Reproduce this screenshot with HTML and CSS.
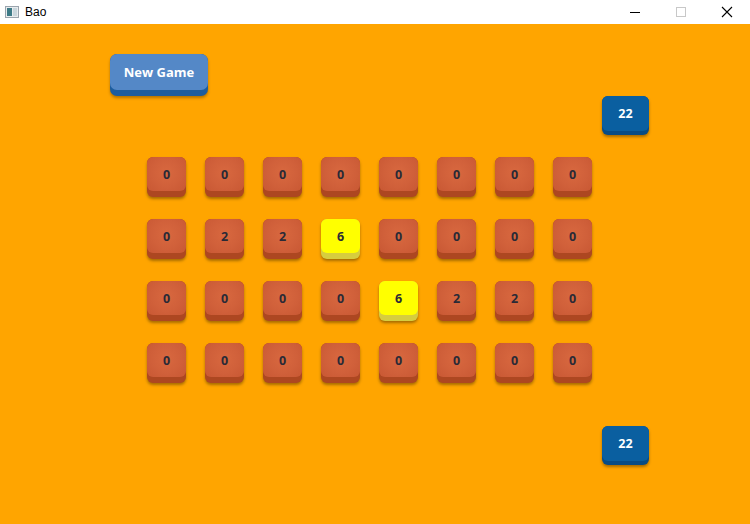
FILE: index.html
```html
<!DOCTYPE html>
<html>
<head>
<meta charset="utf-8">
<title>Bao</title>
<link rel="stylesheet" href="styles.css">
</head>
<body>
<div class="titlebar">
  <div class="app">
    <svg class="app-icon" width="14" height="12" viewBox="0 0 14 12">
      <rect x="0.5" y="0.5" width="13" height="11" fill="#e8ecef" stroke="#9aa4ad"/>
      <rect x="2" y="2" width="5" height="8" fill="#3d7a86"/>
      <rect x="8" y="2" width="4" height="8" fill="#c9d6dc"/>
    </svg>
    <span class="title">Bao</span>
  </div>
  <div class="controls">
    <svg class="ctl" width="46" height="24" viewBox="0 0 46 24"><line x1="18" y1="12.5" x2="28" y2="12.5" stroke="#000" stroke-width="1"/></svg>
    <svg class="ctl" width="46" height="24" viewBox="0 0 46 24"><rect x="18.5" y="7.5" width="9" height="9" fill="none" stroke="#c8c8c8" stroke-width="1"/></svg>
    <svg class="ctl" width="46" height="24" viewBox="0 0 46 24"><path d="M18 7 L28 17 M28 7 L18 17" stroke="#000" stroke-width="1.1"/></svg>
  </div>
</div>
<div class="main">
  <div class="toprow">
    <div class="newgame" role="button"><span class="face">New Game</span></div>
  </div>
  <div class="scorerow">
    <div class="score"><span class="face">22</span></div>
  </div>
  <div class="board">
    <div class="pit"><span class="face">0</span></div><div class="pit"><span class="face">0</span></div><div class="pit"><span class="face">0</span></div><div class="pit"><span class="face">0</span></div><div class="pit"><span class="face">0</span></div><div class="pit"><span class="face">0</span></div><div class="pit"><span class="face">0</span></div><div class="pit"><span class="face">0</span></div>
    <div class="pit"><span class="face">0</span></div><div class="pit"><span class="face">2</span></div><div class="pit"><span class="face">2</span></div><div class="pit hot"><span class="face">6</span></div><div class="pit"><span class="face">0</span></div><div class="pit"><span class="face">0</span></div><div class="pit"><span class="face">0</span></div><div class="pit"><span class="face">0</span></div>
    <div class="pit"><span class="face">0</span></div><div class="pit"><span class="face">0</span></div><div class="pit"><span class="face">0</span></div><div class="pit"><span class="face">0</span></div><div class="pit hot"><span class="face">6</span></div><div class="pit"><span class="face">2</span></div><div class="pit"><span class="face">2</span></div><div class="pit"><span class="face">0</span></div>
    <div class="pit"><span class="face">0</span></div><div class="pit"><span class="face">0</span></div><div class="pit"><span class="face">0</span></div><div class="pit"><span class="face">0</span></div><div class="pit"><span class="face">0</span></div><div class="pit"><span class="face">0</span></div><div class="pit"><span class="face">0</span></div><div class="pit"><span class="face">0</span></div>
  </div>
  <div class="scorerow bottom">
    <div class="score"><span class="face">22</span></div>
  </div>
</div>
</body>
</html>
```
FILE: styles.css
```css
html, body {
  margin: 0;
  padding: 0;
  width: 750px;
  height: 524px;
  overflow: hidden;
  background: #ffa500;
  font-family: "Open Sans", "Noto Sans", sans-serif;
}

.titlebar {
  height: 24px;
  background: #ffffff;
  display: flex;
  align-items: center;
  justify-content: space-between;
}

.app {
  display: flex;
  align-items: center;
  padding-left: 5px;
}

.app-icon {
  display: block;
}

.title {
  margin-left: 6px;
  font-family: "Liberation Sans", "DejaVu Sans", sans-serif;
  font-size: 12px;
  color: #000;
}

.controls {
  display: flex;
}

.ctl {
  display: block;
}

.main {
  height: 500px;
  background: #ffa500;
  display: flex;
  flex-direction: column;
}

.toprow {
  padding: 30px 0 0 110px;
  display: flex;
}

.face {
  display: flex;
  align-items: center;
  justify-content: center;
}

.newgame {
  width: 98px;
  height: 42px;
  border-radius: 7px;
  background: #1d5d9e;
  color: #ffffff;
  font-weight: 700;
  font-size: 13px;
  box-shadow: 0 2px 3px rgba(0, 0, 0, 0.3);
  cursor: pointer;
}

.newgame .face {
  height: 36px;
  border-radius: 7px;
  background: #5488c7;
}

.scorerow {
  display: flex;
  justify-content: flex-end;
  padding-right: 101px;
}

.score {
  width: 47px;
  height: 39px;
  border-radius: 6px;
  background: #084c85;
  color: #ffffff;
  font-weight: 700;
  font-size: 12.5px;
  box-shadow: 0 2px 3px rgba(0, 0, 0, 0.35);
}

.score .face {
  height: 35px;
  border-radius: 6px;
  background: #0a5fa0;
}

.board {
  margin: 22px 0 0 147px;
  display: grid;
  grid-template-columns: repeat(8, 39px);
  grid-auto-rows: 40px;
  column-gap: 19px;
  row-gap: 22px;
}

.pit {
  width: 39px;
  height: 40px;
  border-radius: 6px;
  background: #ad4721;
  color: #2a2a36;
  font-weight: 700;
  font-size: 12.5px;
  box-shadow: 0 2px 3px rgba(0, 0, 0, 0.35);
}

.pit .face {
  height: 34px;
  border-radius: 6px;
  background: radial-gradient(circle at 50% 45%, #d8683f 0%, #d0603a 55%, #c85833 100%);
}

.pit.hot {
  background: #d6cd3f;
}

.pit.hot .face {
  background: #ffff00;
}

.scorerow.bottom {
  margin-top: 43px;
}
```
